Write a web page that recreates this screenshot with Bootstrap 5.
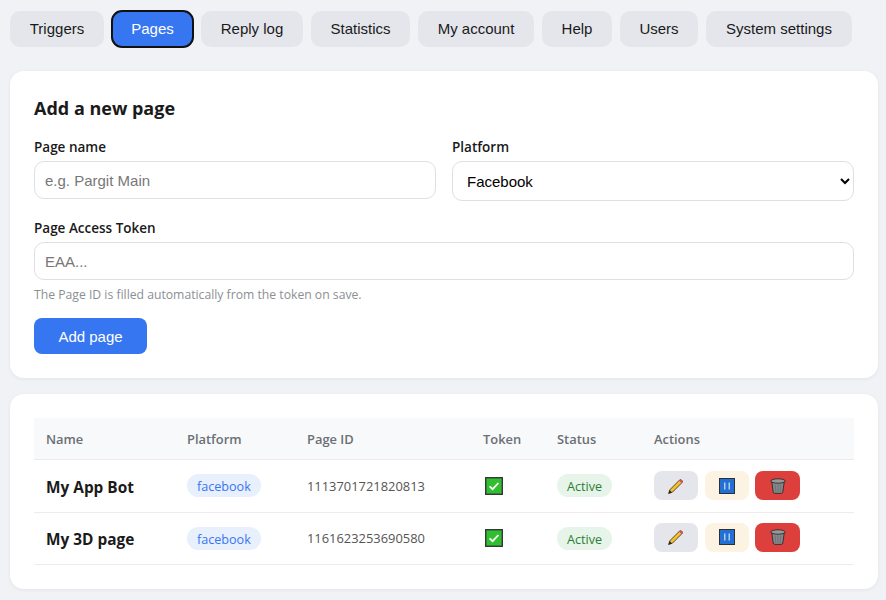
<!DOCTYPE html>
<html lang="en"><head><meta charset="utf-8"><title>Pages</title>
<link rel="stylesheet" href="https://cdn.jsdelivr.net/npm/bootstrap@5.3.0/dist/css/bootstrap.min.css">
<style>
body{background:#f0f2f6;font-family:"Open Sans","Noto Sans",sans-serif;color:#1a1a1a;padding:11px 10px 0;min-height:600px}
.tabbar{gap:8px;margin-bottom:24px}
.tabbtn{font:15px/18px "Liberation Sans",Arial,sans-serif;background:#e4e6eb;color:#1a1a1a;border:0;border-radius:10px;padding:9px 0;height:36px}
.tabbtn.on{background:#3776f1;color:#fff;outline:2px solid #111;outline-offset:-1px}
.tb1{width:94px}.tb2{width:81px}.tb3{width:102px}.tb4{width:99px}.tb5{width:116px}.tb6{width:70px}.tb7{width:78px}.tb8{width:146px}
.panel{background:#fff;border-radius:14px;padding:24px;margin-bottom:16px;box-shadow:0 1px 4px rgba(0,0,0,.06);width:868px}
.panel-title{font-size:18px;font-weight:700;line-height:24px;margin:1px 0 18px}
.fld-label{display:block;font-size:13.5px;font-weight:600;line-height:18px;margin-bottom:5px;color:#1a1a1a}
.fld{display:block;width:100%;font:15px "Liberation Sans",Arial,sans-serif;height:38px;border:1px solid #dddfe3;border-radius:10px;padding:0 10px;color:#1a1a1a;background:#fff}
.fld::placeholder{color:#777}
select.fld{height:40px;padding:0 10px;color:#000}
.grid2{display:grid;grid-template-columns:402px 402px;gap:16px;margin-bottom:18px}
.hint{font-size:12.2px;line-height:16px;color:#8c8f94;margin:7px 0 15px}
.addbtn{font:15px "Liberation Sans",Arial,sans-serif;background:#3776f1;color:#fff;border:0;border-radius:8px;height:36px;width:113px;display:block}
.tbl{border-collapse:collapse;table-layout:fixed;width:820px;font-size:12.9px}
.tbl th{background:#f8f9fa;color:#6b6f76;font-weight:600;height:41px;padding:2px 12px 0;border-bottom:1px solid #ececee}
.tbl td{height:52px;padding:2px 12px 0;border-bottom:1px solid #ececee;color:#555}
.tbl tbody tr:first-child td{height:53px}
.c1{width:141px}.c2{width:120px}.c3{width:176px}.c4{width:74px}.c5{width:97px}.c6{width:212px}
.tbl td.nm{font-size:15.4px;font-weight:700;color:#1a1a1a;padding-top:4px}
.pill{display:inline-block;vertical-align:middle;font-size:12.6px;line-height:16px;padding:5px 10px 2px;border-radius:12px;margin-bottom:2px}
.pill-fb{background:#e8effd;color:#3776f1}
.pill-ok{background:#e6f4ea;color:#2e7d32;font-weight:500}
.acts{gap:7px;margin-bottom:4px}
.tbl tbody tr:first-child .acts{margin-bottom:2px}
.act{border:0;border-radius:8px;width:44px;height:29px;display:flex;align-items:center;justify-content:center;padding:0}
.act-e{background:#e4e6eb}.act-p{background:#fdf3e3}.act-d{background:#dc3f3c;width:45px;margin-left:-1px}
.tokicon{display:block;margin:0 0 2px 2px}
</style></head><body>
<svg width="0" height="0" class="position-absolute"><defs>
<symbol id="pencil" viewBox="0 0 16 16"><path d="M2 11.6 11.6 2a1.2 1.2 0 0 1 1.7 0l.8.8a1.2 1.2 0 0 1 0 1.7L4.5 14.1.6 15.5Z" fill="#f8c026" stroke="#2e2a1e" stroke-width=".8"/><path d="M11 2.6 13.5 5.1 14.3 4.3a1.2 1.2 0 0 0 0-1.7l-.9-.9a1.2 1.2 0 0 0-1.7 0Z" fill="#d9476b"/><path d="M1.5 12 4.1 14.5.6 15.5Z" fill="#262626"/></symbol>
<symbol id="pause" viewBox="0 0 16 16"><rect x=".5" y=".5" width="15" height="15" fill="#2270d4" stroke="#2b2f36"/><path d="M5.8 4.5v7M10.2 4.5v7" stroke="#cfe2fa" stroke-width="1.2"/></symbol>
<symbol id="trash" viewBox="0 0 16 16"><path d="M1.8 4 3.2 14a1.6 1.6 0 0 0 1.5 1.4h6.6a1.6 1.6 0 0 0 1.5-1.4L14.2 4Z" fill="#85878a" stroke="#2c2c2c" stroke-width=".9"/><ellipse cx="8" cy="3" rx="7.2" ry="2.2" fill="#96989b" stroke="#2c2c2c" stroke-width=".9"/><path d="M5.2 6.5 5.8 14M8 6.5V14M10.8 6.5 10.2 14" stroke="#68696b" stroke-width=".7"/></symbol>
<symbol id="check" viewBox="0 0 18 18"><rect x=".7" y=".7" width="16.6" height="16.6" fill="#2fbf2f" stroke="#33383a" stroke-width="1.4"/><path d="M4.6 9.4 7.6 12.2 13.4 6" fill="none" stroke="#fff" stroke-width="1.8"/></symbol>
</defs></svg>
<nav class="d-flex tabbar">
<button class="tabbtn tb1">Triggers</button><button class="tabbtn tb2 on">Pages</button><button class="tabbtn tb3">Reply log</button><button class="tabbtn tb4">Statistics</button><button class="tabbtn tb5">My account</button><button class="tabbtn tb6">Help</button><button class="tabbtn tb7">Users</button><button class="tabbtn tb8">System settings</button>
</nav>
<section class="panel">
<h2 class="panel-title">Add a new page</h2>
<div class="grid2">
<div><label class="fld-label">Page name</label><input class="fld" placeholder="e.g. Pargit Main"></div>
<div><label class="fld-label">Platform</label><select class="fld"><option>Facebook</option></select></div>
</div>
<label class="fld-label">Page Access Token</label><input class="fld" placeholder="EAA...">
<p class="hint">The Page ID is filled automatically from the token on save.</p>
<button class="addbtn">Add page</button>
</section>
<section class="panel">
<table class="tbl">
<colgroup><col class="c1"><col class="c2"><col class="c3"><col class="c4"><col class="c5"><col class="c6"></colgroup>
<thead><tr><th>Name</th><th>Platform</th><th>Page ID</th><th>Token</th><th>Status</th><th>Actions</th></tr></thead>
<tbody>
<tr><td class="nm">My App Bot</td><td><span class="pill pill-fb">facebook</span></td><td>1113701721820813</td><td><svg class="tokicon" width="18" height="18"><use href="#check"/></svg></td><td><span class="pill pill-ok">Active</span></td>
<td><div class="d-flex acts"><button class="act act-e"><svg width="16" height="16"><use href="#pencil"/></svg></button><button class="act act-p"><svg width="16" height="16"><use href="#pause"/></svg></button><button class="act act-d"><svg width="16" height="16"><use href="#trash"/></svg></button></div></td></tr>
<tr><td class="nm">My 3D page</td><td><span class="pill pill-fb">facebook</span></td><td>1161623253690580</td><td><svg class="tokicon" width="18" height="18"><use href="#check"/></svg></td><td><span class="pill pill-ok">Active</span></td>
<td><div class="d-flex acts"><button class="act act-e"><svg width="16" height="16"><use href="#pencil"/></svg></button><button class="act act-p"><svg width="16" height="16"><use href="#pause"/></svg></button><button class="act act-d"><svg width="16" height="16"><use href="#trash"/></svg></button></div></td></tr>
</tbody></table>
</section>
<script src="https://cdn.jsdelivr.net/npm/bootstrap@5.3.0/dist/js/bootstrap.bundle.min.js"></script>
</body></html>
